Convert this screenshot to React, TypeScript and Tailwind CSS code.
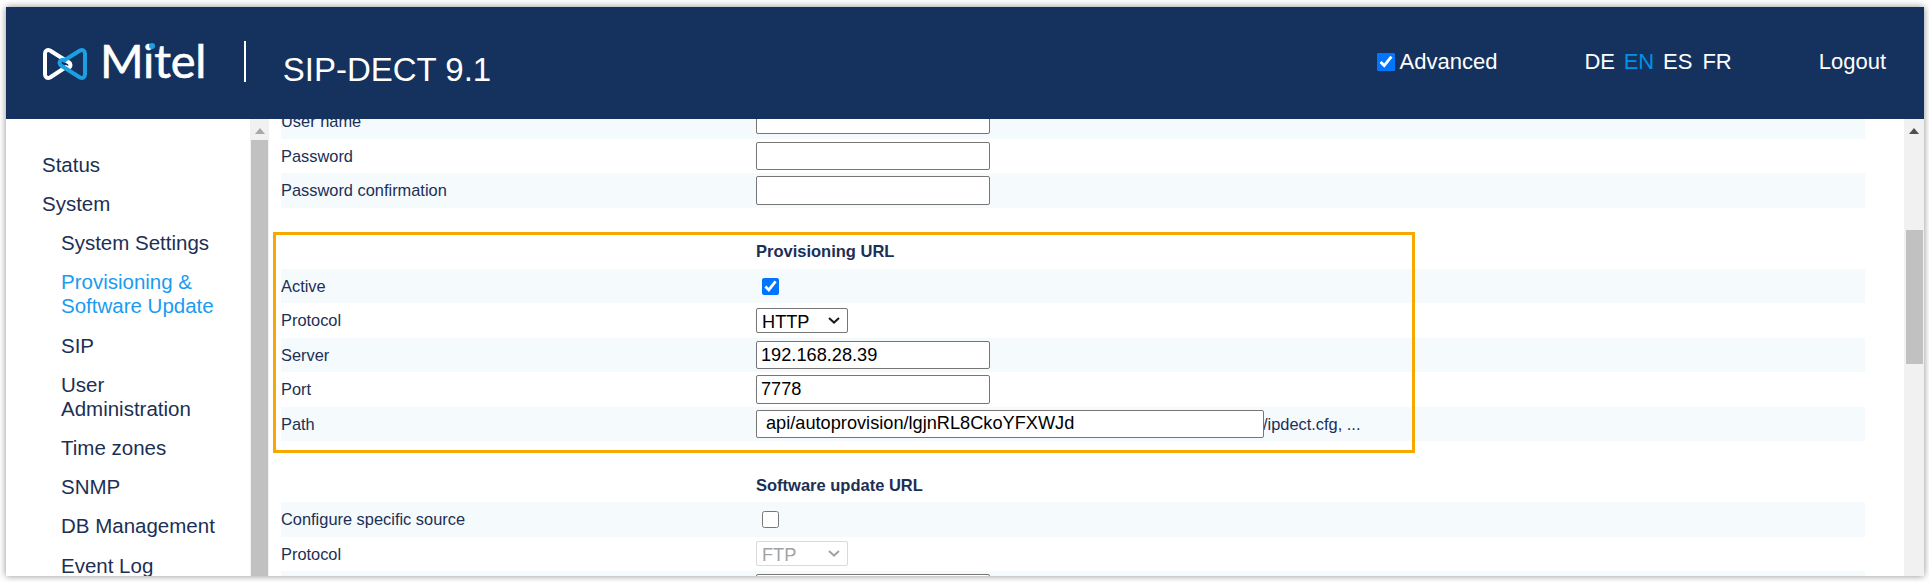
import React from "react";

type Row =
  | { kind: "spacer"; h: string }
  | { kind: "head"; text: string }
  | { kind: "row"; label: string; striped: boolean; control: React.ReactNode };

const inputCls =
  "block h-[28.5px] w-[234px] rounded-[2px] border border-[#767676] bg-white px-[4px] text-[18.2px] text-black outline-none";

const TextInput = ({ value = "" }: { value?: string }) => (
  <input readOnly defaultValue={value} className={inputCls} />
);

const Box = ({ checked = false }: { checked?: boolean }) => (
  <input type="checkbox" readOnly checked={checked} className="ml-[6px] block h-[17px] w-[17px]" />
);

const Chevron = ({ color }: { color: string }) => (
  <svg width="12" height="7" viewBox="0 0 12 7" fill="none" className="pointer-events-none absolute left-[72px] top-[9px]">
    <path d="M1 1L6 5.6L11 1" stroke={color} strokeWidth="2" />
  </svg>
);

const rows: Row[] = [
  { kind: "row", label: "User name", striped: true, control: <div className="-mt-[4px]"><TextInput /></div> },
  { kind: "row", label: "Password", striped: false, control: <TextInput /> },
  { kind: "row", label: "Password confirmation", striped: true, control: <TextInput /> },
  { kind: "spacer", h: "h-[27px]" },
  { kind: "head", text: "Provisioning URL" },
  { kind: "row", label: "Active", striped: true, control: <Box checked /> },
  {
    kind: "row",
    label: "Protocol",
    striped: false,
    control: (
      <div className="relative">
        <select defaultValue="HTTP" className="block h-[25px] w-[92px] appearance-none rounded-[2px] border border-[#767676] bg-white pl-[5px] text-[18.2px] text-black">
          <option>HTTP</option>
        </select>
        <Chevron color="#1a1a1a" />
      </div>
    ),
  },
  { kind: "row", label: "Server", striped: true, control: <TextInput value="192.168.28.39" /> },
  { kind: "row", label: "Port", striped: false, control: <TextInput value="7778" /> },
  {
    kind: "row",
    label: "Path",
    striped: true,
    control: (
      <div className="flex items-center">
        <input
          readOnly
          defaultValue="api/autoprovision/lgjnRL8CkoYFXWJd"
          className="relative block h-[28.5px] w-[508px] rounded-[2px] border border-[#767676] bg-white px-[9px] text-[18.2px] text-black outline-none"
        />
        <span className="-ml-[1px] text-[16.4px] text-[#1c2f55]">/ipdect.cfg, ...</span>
      </div>
    ),
  },
  { kind: "spacer", h: "h-[27px]" },
  { kind: "head", text: "Software update URL" },
  { kind: "row", label: "Configure specific source", striped: true, control: <Box /> },
  {
    kind: "row",
    label: "Protocol",
    striped: false,
    control: (
      <div className="relative">
        <select disabled defaultValue="FTP" className="block h-[25px] w-[92px] appearance-none rounded-[2px] border border-[#d9d9d9] bg-white pl-[5px] text-[18.2px] text-[#a3a3a3]">
          <option>FTP</option>
        </select>
        <Chevron color="#a3a3a3" />
      </div>
    ),
  },
  { kind: "row", label: "Server", striped: true, control: <TextInput /> },
];

const nav: { label: React.ReactNode; sub?: boolean; active?: boolean }[] = [
  { label: "Status" },
  { label: "System" },
  { label: "System Settings", sub: true },
  { label: <>Provisioning &amp;<br />Software Update</>, sub: true, active: true },
  { label: "SIP", sub: true },
  { label: <>User<br />Administration</>, sub: true },
  { label: "Time zones", sub: true },
  { label: "SNMP", sub: true },
  { label: "DB Management", sub: true },
  { label: "Event Log", sub: true },
];

const Arrow = ({ color }: { color: string }) => (
  <svg width="10" height="6" viewBox="0 0 10 6" className="mx-auto mt-[9px] block">
    <path d="M5 0L10 6H0Z" fill={color} />
  </svg>
);

const Logo = () => (
  <svg width="46" height="34" viewBox="0 0 46 34" fill="none" className="block">
    <path
      d="M24 20L8 30.5C5.5 31.8 3 30.3 3 27.5V6.5C3 3.7 5.5 2.2 8 3.5L27 15.5C30.5 18 27 23 23.5 20.5"
      stroke="#ffffff"
      strokeWidth="4"
      strokeLinecap="round"
      strokeLinejoin="round"
    />
    <path
      d="M22 13.5L38 3.5C40.5 2.2 43 3.7 43 6.5V27.5C43 30.3 40.5 31.8 38 30.5L19 18.5C15.5 16 19 11 22.5 13.5"
      stroke="#1ba0e2"
      strokeWidth="4"
      strokeLinecap="round"
      strokeLinejoin="round"
    />
  </svg>
);

export default function App() {
  return (
    <div className="h-[582px] w-[1929px] overflow-hidden bg-white pb-[6px] pl-[6px] pr-[5px] pt-[7px] font-['Liberation_Sans',Arial,sans-serif]">
      <div className="flex h-full flex-col bg-white shadow-[0_0_7px_rgba(0,0,0,0.45)]">
        <header className="flex h-[112px] shrink-0 bg-[#15325f] text-white">
          <div className="ml-[36px] mt-[40px] shrink-0">
            <Logo />
          </div>
          <div className="relative ml-[12px] mt-[25px] h-[56px] font-['Lato',sans-serif] text-[47px] leading-[56px] tracking-[-0.2px] [-webkit-text-stroke:0.6px_white]">
            Mitel
            <span className="absolute left-[49px] top-[11px] h-[6px] w-[6px] rounded-full bg-[#1ba0e2]" />
          </div>
          <div className="ml-[38px] mt-[34px] h-[41px] w-[1.5px] bg-white" />
          <div className="ml-[37px] mt-[45px] text-[33px] leading-[36px]">SIP-DECT 9.1</div>
          <div className="ml-auto mr-[38px] mt-[43px] flex h-[24px] items-center text-[22px] leading-[24px]">
            <input type="checkbox" readOnly checked className="mr-[5px] h-[18px] w-[18px]" />
            <span>Advanced</span>
            <span className="ml-[87px]">DE</span>
            <span className="ml-[8.7px] text-[#0092e6]">EN</span>
            <span className="ml-[8.8px]">ES</span>
            <span className="ml-[10px]">FR</span>
            <span className="ml-[87px]">Logout</span>
          </div>
        </header>
        <div className="flex min-h-0 flex-1 overflow-hidden">
          <nav className="w-[244px] shrink-0 pl-[36px] pt-[26.3px] text-[20.5px] leading-[24px] text-[#1c2f55]">
            {nav.map((n, i) => (
              <div key={i} className={`py-[7.6px] ${n.sub ? "pl-[19px]" : ""} ${n.active ? "text-[#1a9bf0]" : ""}`}>
                {n.label}
              </div>
            ))}
          </nav>
          <div className="w-[19px] shrink-0 bg-[#f1f1f1]">
            <Arrow color="#a8a8a8" />
            <div className="ml-[1px] mt-[6px] h-[500px] w-[17px] bg-[#c1c1c1]" />
          </div>
          <main className="relative min-w-0 flex-1 overflow-hidden pl-[12px] pr-[39px]">
            <div className="-mt-[14.5px]">
              {rows.map((r, i) => {
                if (r.kind === "spacer") return <div key={i} className={r.h} />;
                if (r.kind === "head")
                  return (
                    <div key={i} className="flex h-[34.4px] items-center pl-[475px] text-[16.5px] font-bold text-[#1c2f55]">
                      {r.text}
                    </div>
                  );
                return (
                  <div key={i} className={`flex h-[34.4px] items-center text-[16.4px] text-[#1c2f55] ${r.striped ? "bg-[#f5fafd]" : ""}`}>
                    <div className="w-[475px] shrink-0">{r.label}</div>
                    {r.control}
                  </div>
                );
              })}
            </div>
            <div className="absolute left-[4px] top-[113px] h-[221px] w-[1142px] border-[3px] border-[#f7a800]" />
          </main>
          <div className="w-[20px] shrink-0 bg-[#f1f1f1]">
            <Arrow color="#505050" />
            <div className="ml-[2px] mt-[96px] h-[134px] w-[17px] bg-[#c1c1c1]" />
          </div>
        </div>
      </div>
    </div>
  );
}
